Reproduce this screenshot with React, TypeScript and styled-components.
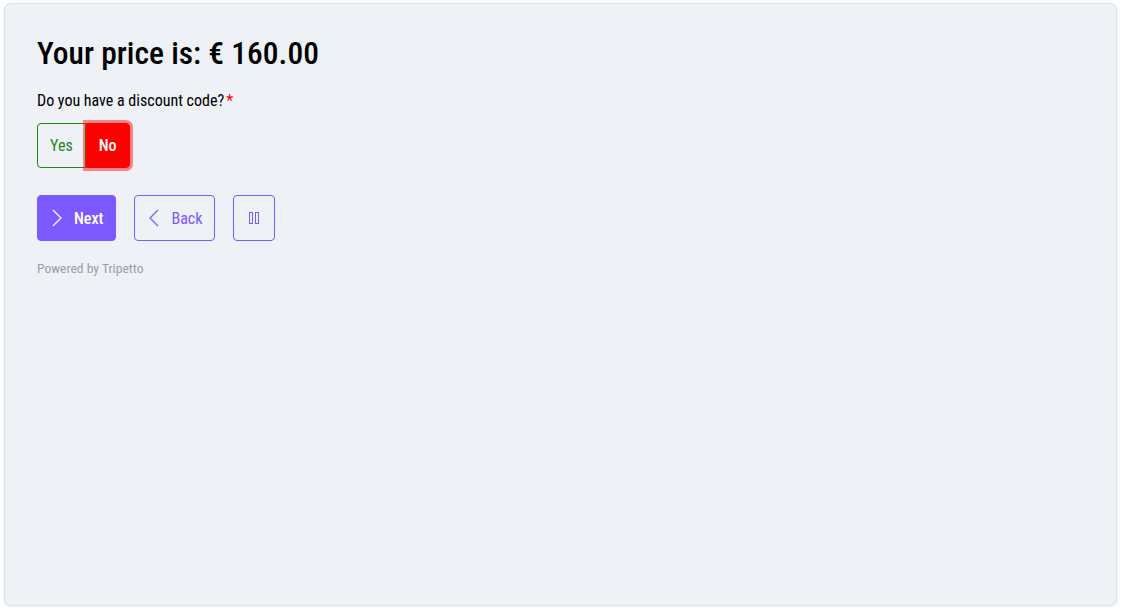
import styled, { createGlobalStyle } from 'styled-components';

const GlobalStyle = createGlobalStyle`
  html, body {
    margin: 0;
    padding: 0;
    background: #ffffff;
  }
  body {
    font-family: Roboto, "Liberation Sans", sans-serif;
    font-stretch: condensed;
  }
`;

const ScPage = styled.div`
  width: 1125px;
  height: 615px;
  box-sizing: border-box;
  padding: 3px 8px 9px 4px;
`;

const ScCard = styled.div`
  height: 100%;
  box-sizing: border-box;
  background-color: #eef1f6;
  border: 1px solid #dcdfe4;
  border-radius: 7px;
  box-shadow: 0 1px 3px rgba(0, 0, 0, 0.08);
  padding: 29px 32px;
  display: flex;
  flex-direction: column;
  align-items: flex-start;
`;

const ScTitle = styled.h1`
  margin: 0;
  font-size: 31.5px;
  font-weight: 500;
  color: #000;
  line-height: 42px;
`;

const ScLabel = styled.label`
  margin-top: 15px;
  font-size: 16px;
  color: #000;
  line-height: 22px;
  > span {
    color: #ff0000;
    margin-left: 2px;
  }
`;

const ScToggle = styled.div`
  margin-top: 11px;
  display: flex;
`;

type OptionProps = { $active?: boolean; $tone: 'yes' | 'no' };
const ScOption = styled.button<OptionProps>`
  font: inherit;
  font-size: 16px;
  font-weight: ${p => (p.$active ? 500 : 400)};
  height: 45px;
  padding: 0 12px;
  cursor: pointer;
  border: 1px solid ${p => (p.$tone === 'yes' ? '#188a18' : '#ff0000')};
  color: ${p => (p.$active ? '#fff' : p.$tone === 'yes' ? '#188a18' : '#ff0000')};
  background-color: ${p => (p.$active ? '#ff0000' : 'transparent')};
  border-radius: ${p => (p.$tone === 'yes' ? '4px 0 0 4px' : '0 4px 4px 0')};
  ${p => p.$active && 'box-shadow: 0 0 0 3px rgba(255, 0, 0, 0.45);'}
`;

const ScActions = styled.div`
  margin-top: 27px;
  display: flex;
  gap: 18px;
`;

type ButtonProps = { $primary?: boolean; $icon?: boolean };
const ScButton = styled.button<ButtonProps>`
  font: inherit;
  font-size: 16px;
  height: 46px;
  padding: ${p => (p.$icon ? '0 14px' : '0 12px 0 14px')};
  display: flex;
  align-items: center;
  gap: 12px;
  border-radius: 4px;
  cursor: pointer;
  border: 1px solid #7b58ff;
  color: ${p => (p.$primary ? '#fff' : '#7b58ff')};
  background-color: ${p => (p.$primary ? '#7b58ff' : 'transparent')};
  font-weight: ${p => (p.$primary ? 500 : 400)};
`;

const ScPowered = styled.div`
  margin-top: 19px;
  font-size: 13.6px;
  color: #9a9ea6;
`;

const Chevron = ({ dir }: { dir: 'left' | 'right' }) => (
  <svg width="10" height="18" viewBox="0 0 10 18" fill="none" stroke="currentColor" strokeWidth="1.2">
    {dir === 'right' ? <path d="M1 1l8 8-8 8" /> : <path d="M9 1L1 9l8 8" />}
  </svg>
);

const Pause = () => (
  <svg width="12" height="14" viewBox="0 0 12 14" fill="none" stroke="currentColor" strokeWidth="1">
    <rect x="1.5" y="1.5" width="3" height="11" />
    <rect x="7.5" y="1.5" width="3" height="11" />
  </svg>
);

function App() {
  return (
    <ScPage>
      <GlobalStyle />
      <ScCard>
        <ScTitle>{'Your price is: € 160.00'}</ScTitle>
        <ScLabel>
          {'Do you have a discount code?'}
          <span>*</span>
        </ScLabel>
        <ScToggle>
          <ScOption $tone="yes">Yes</ScOption>
          <ScOption $tone="no" $active>No</ScOption>
        </ScToggle>
        <ScActions>
          <ScButton $primary>
            <Chevron dir="right" />
            Next
          </ScButton>
          <ScButton>
            <Chevron dir="left" />
            Back
          </ScButton>
          <ScButton $icon>
            <Pause />
          </ScButton>
        </ScActions>
        <ScPowered>{'Powered by Tripetto'}</ScPowered>
      </ScCard>
    </ScPage>
  );
}

export default App;
